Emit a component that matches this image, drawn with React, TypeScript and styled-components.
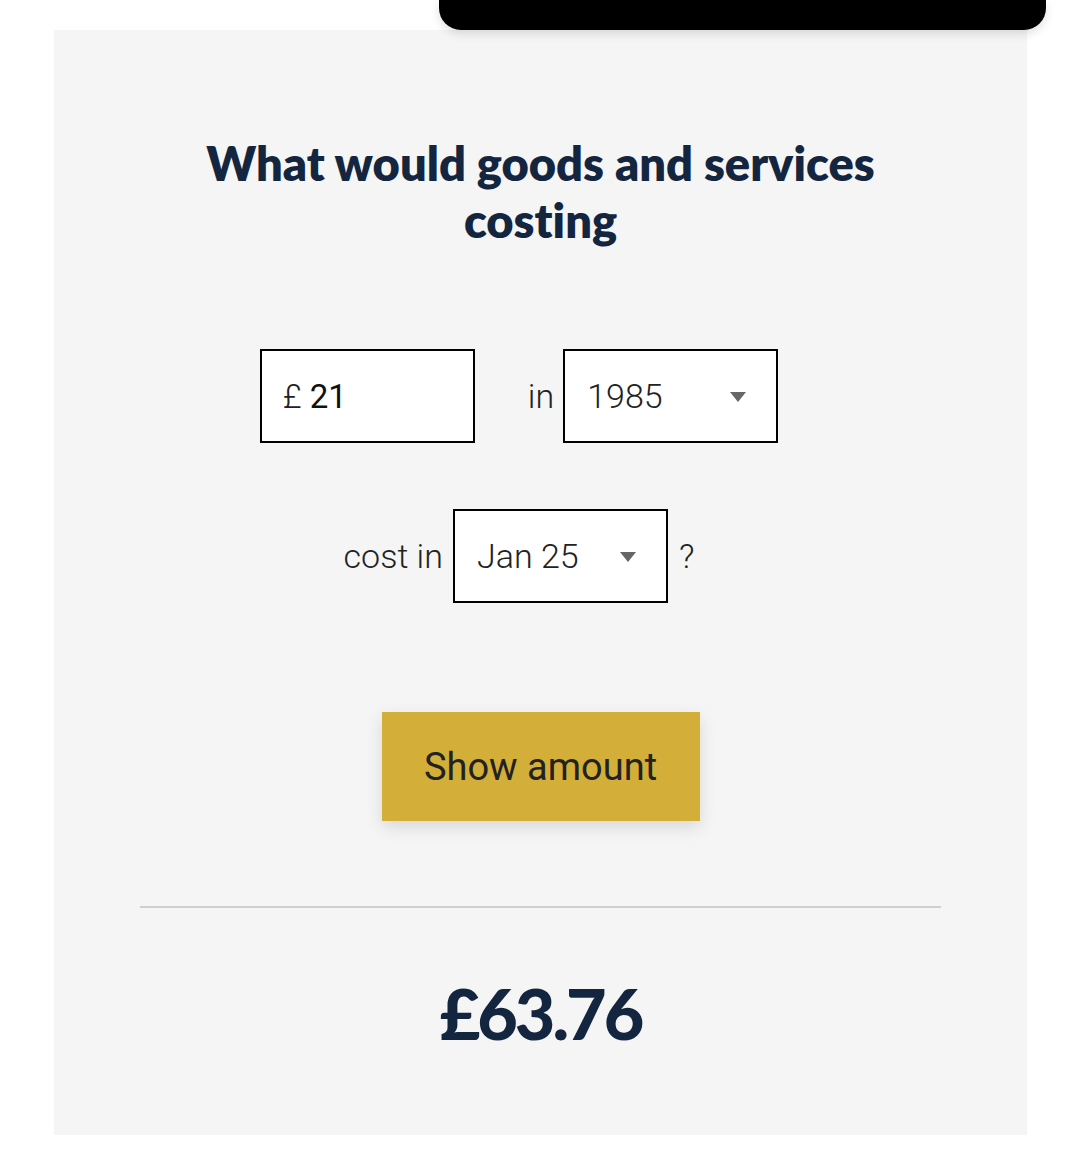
import styled, { createGlobalStyle } from "styled-components";

const GlobalStyle = createGlobalStyle`
    html, body {
        margin: 0;
        padding: 0;
        background: #ffffff;
    }
    body {
        font-family: Roboto, "Liberation Sans", sans-serif;
    }
`;

const StyledPage = styled.div`
    position: relative;
    width: 1080px;
    height: 1166px;
    padding-top: 30px;
    box-sizing: border-box;
`;

const StyledTopBar = styled.div`
    position: absolute;
    top: 0;
    left: 439px;
    width: 607px;
    height: 30px;
    background: #000;
    border-radius: 0 0 22px 22px;
    box-shadow: 0 4px 10px rgba(0, 0, 0, 0.12);
    z-index: 2;
`;

const StyledPanel = styled.section`
    margin-left: 54px;
    width: 973px;
    height: 1105px;
    background: #f5f5f5;
    display: flex;
    flex-direction: column;
    align-items: center;
    padding-top: 105px;
    box-sizing: border-box;
`;

const StyledTitle = styled.h2`
    margin: 0;
    width: 760px;
    text-align: center;
    font-family: Lato, "Open Sans", sans-serif;
    font-weight: 800;
    font-size: 47px;
    line-height: 57px;
    font-variant-ligatures: none;
    color: #14263f;
`;

const StyledRow = styled.div<{ $top: number }>`
    display: flex;
    align-items: center;
    justify-content: center;
    margin-top: ${props => props.$top}px;
    padding-right: 43px;
`;

const StyledLabel = styled.span<{ $left?: number; $right?: number }>`
    font-size: 34px;
    font-weight: 300;
    color: #222;
    margin-left: ${props => props.$left ?? 0}px;
    margin-right: ${props => props.$right ?? 0}px;
`;

const StyledBox = styled.div`
    position: relative;
    width: 215px;
    height: 94px;
    box-sizing: border-box;
    border: 2px solid #000;
    background: #fff;
    display: flex;
    align-items: center;
    padding-left: 21px;
`;

const StyledCurrency = styled.span`
    font-size: 33px;
    font-weight: 300;
    color: #222;
    margin-right: 8px;
`;

const StyledAmountInput = styled.input`
    border: none;
    outline: none;
    background: transparent;
    width: 140px;
    padding: 0;
    font-family: Roboto, sans-serif;
    font-size: 33px;
    font-weight: 400;
    color: #111;
`;

const StyledSelect = styled.select`
    appearance: none;
    border: none;
    outline: none;
    background: transparent;
    width: 100%;
    height: 100%;
    padding: 0 0 0 1px;
    font-family: Roboto, sans-serif;
    font-size: 34px;
    font-weight: 300;
    color: #222;
`;

const StyledArrow = styled.svg`
    position: absolute;
    right: 30px;
    top: 41px;
    pointer-events: none;
`;

const StyledButton = styled.button`
    margin-top: 109px;
    width: 318px;
    height: 109px;
    border: none;
    background: #d3ae38;
    font-family: Roboto, sans-serif;
    font-size: 38px;
    font-weight: 400;
    color: #222;
    box-shadow: 0 6px 16px rgba(0, 0, 0, 0.12);
    cursor: pointer;
`;

const StyledDivider = styled.hr`
    margin: 85px 0 0;
    width: 801px;
    border: none;
    border-top: 2px solid #cfcfcf;
`;

const StyledResult = styled.p`
    margin: 63px 0 0;
    font-family: Lato, "Open Sans", sans-serif;
    font-weight: 900;
    font-size: 70px;
    letter-spacing: -3px;
    color: #14263f;
`;

function Arrow() {
    return (
        <StyledArrow width="16" height="10" viewBox="0 0 16 10">
            <path d="M0 0 L16 0 L8 10 Z" fill="#666" />
        </StyledArrow>
    );
}

export default function App() {
    return (
        <>
            <GlobalStyle />
            <StyledPage>
                <StyledTopBar />
                <StyledPanel>
                    <StyledTitle>What would goods and services costing</StyledTitle>

                    <StyledRow $top={100}>
                        <StyledBox>
                            <StyledCurrency>£</StyledCurrency>
                            <StyledAmountInput defaultValue="21" />
                        </StyledBox>
                        <StyledLabel $left={53} $right={9}>in</StyledLabel>
                        <StyledBox>
                            <StyledSelect defaultValue="1985">
                                <option>1984</option>
                                <option>1985</option>
                                <option>1986</option>
                            </StyledSelect>
                            <Arrow />
                        </StyledBox>
                    </StyledRow>

                    <StyledRow $top={66}>
                        <StyledLabel $right={10}>cost in</StyledLabel>
                        <StyledBox>
                            <StyledSelect defaultValue="Jan 25">
                                <option>Dec 24</option>
                                <option>Jan 25</option>
                            </StyledSelect>
                            <Arrow />
                        </StyledBox>
                        <StyledLabel $left={11}>?</StyledLabel>
                    </StyledRow>

                    <StyledButton>Show amount</StyledButton>
                    <StyledDivider />
                    <StyledResult>£63.76</StyledResult>
                </StyledPanel>
            </StyledPage>
        </>
    );
}
